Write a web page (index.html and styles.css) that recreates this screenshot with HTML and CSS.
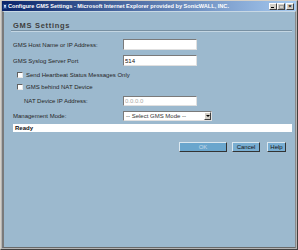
FILE: index.html
```html
<html>
<head>
<meta name="viewport" content="width=device-width, initial-scale=1" />
<title>Configure GMS Settings</title>
<link rel="stylesheet" href="styles.css">
</head>
<body>
<div class="window">
    <div class="titlebar">
        <span class="appicon"></span>
        <span class="title">Configure GMS Settings - Microsoft Internet Explorer provided by SonicWALL, INC.</span>
        <span class="winbtns">
            <span class="wbtn min"></span><span class="wbtn max"></span><span class="wbtn close">&#215;</span>
        </span>
    </div>
    <div class="client">
        <h2 class="section">GMS Settings</h2>
        <div class="row r1">
            <label class="lbl">GMS Host Name or IP Address:</label>
            <input class="field" type="text" value="">
        </div>
        <div class="row r2">
            <label class="lbl">GMS Syslog Server Port</label>
            <input class="field" type="text" value="514">
        </div>
        <div class="row cb r3">
            <input class="check" type="checkbox"><span>Send Heartbeat Status Messages Only</span>
        </div>
        <div class="row cb r4">
            <input class="check" type="checkbox"><span>GMS behind NAT Device</span>
        </div>
        <div class="row r5">
            <label class="lbl indent">NAT Device IP Address:</label>
            <input class="field" type="text" value="0.0.0.0" disabled>
        </div>
        <div class="row r6">
            <label class="lbl">Management Mode:</label>
            <div class="select"><span class="opt">-- Select GMS Mode --</span><span class="arrow"></span></div>
        </div>
        <div class="status">Ready</div>
        <div class="buttons">
            <button class="btn ok" disabled>OK</button>
            <button class="btn cancel">Cancel</button>
            <button class="btn help">Help</button>
        </div>
    </div>
</div>
</body>
</html>
```
FILE: styles.css
```css
html, body { margin: 0; padding: 0; }
body { width: 298px; height: 250px; overflow: hidden; font-family: "Liberation Sans", Arial, sans-serif; font-size: 6px; color: #262626; }

.window { box-sizing: border-box; width: 298px; height: 250px; display: flex; flex-direction: column; background: #b4b4b4; border: 1px solid #d4d0c8; border-right-color: #404040; border-bottom-color: #404040; padding: 0 1px 1px 1px; }
.titlebar { height: 10px; display: flex; align-items: center; background: linear-gradient(to right, #0a246a, #a6caf0); color: #fff; padding: 0 2px 0 0; }
.appicon { width: 4px; height: 5px; margin: 0 1px 0 1px; background: linear-gradient(#e8f0ff, #6a8ec8); border: 1px solid #23478a; box-sizing: border-box; }
.title { font-weight: bold; font-size: 5.6px; white-space: nowrap; flex: 1; }
.winbtns { display: flex; margin-top: 1px; }
.wbtn { width: 8px; height: 7px; box-sizing: border-box; background: #d4d0c8; border: 1px solid; border-color: #fff #404040 #404040 #fff; font-size: 6px; line-height: 5px; text-align: center; color: #000; position: relative; }
.wbtn.min:after { content: ""; position: absolute; left: 1px; bottom: 1px; width: 3px; height: 1px; background: #000; }
.wbtn.max:after { content: ""; position: absolute; left: 1px; top: 1px; width: 3px; height: 2px; border: 1px solid #a0a0a0; }
.wbtn.close { margin-left: 1px; font-weight: bold; }

.client { flex: 1; display: flex; flex-direction: column; background: #9cb9ce; border-top: 1px solid #c8d8e4; border-left: 2px solid #7a7a7a; border-right: 1px solid #8a8a8a; border-bottom: 1px solid #6a6a6a; }

.section { margin: 10px 3px 0 7px; padding: 0 0 1px 2px; font-size: 7.5px; font-weight: bold; color: #404040; letter-spacing: 0.7px; border-bottom: 1px solid #7890a2; box-shadow: 0 1px 0 #c4d6e2; height: 7px; line-height: 7px; }

.row { display: flex; align-items: center; padding-left: 9px; height: 11px; }
.lbl { width: 110px; }
.lbl.indent { padding-left: 11px; width: 99px; }
.r1 { margin-top: 8px; }
.r2 { margin-top: 5px; }
.r3 { margin-top: 4px; height: 10px; }
.r4 { margin-top: 2px; height: 10px; }
.r5 { margin-top: 4px; height: 10px; }
.r6 { margin-top: 5px; height: 10px; }

.field { box-sizing: border-box; width: 74px; height: 100%; margin: 0; padding: 0 1px; font: inherit; background: #fff; border: 1px solid; border-color: #7a7a7a #e0e0e0 #e0e0e0 #7a7a7a; outline: none; color: #111; }
.field:disabled { color: #a8a8a8; background: #fff; }

.cb { padding-left: 13px; }
.check { appearance: none; -webkit-appearance: none; box-sizing: border-box; width: 6px; height: 6px; margin: 0 3px 0 0; background: #fff; border: 1px solid; border-color: #606060 #e8e8e8 #e8e8e8 #606060; }

.select { box-sizing: border-box; width: 89px; height: 100%; display: flex; align-items: center; background: #fff; border: 1px solid; border-color: #7a7a7a #e0e0e0 #e0e0e0 #7a7a7a; }
.opt { flex: 1; padding-left: 2px; color: #333; }
.arrow { width: 7px; height: 8px; box-sizing: border-box; background: #d4d0c8; border: 1px solid; border-color: #fff #404040 #404040 #fff; display: flex; align-items: center; justify-content: center; }
.arrow:after { content: ""; border-left: 2px solid transparent; border-right: 2px solid transparent; border-top: 2px solid #000; }

.status { margin: 3px 3px 0 9px; height: 8px; line-height: 8px; background: #fff; font-weight: bold; padding-left: 2px; color: #111; }

.buttons { display: flex; justify-content: flex-end; margin: 10px 9px 0 0; height: 10px; }
.btn { box-sizing: border-box; height: 10px; margin: 0 0 0 5px; padding: 0; font: inherit; color: #111; background: #79aed2; border: 1px solid; border-color: #dbe8f0 #333 #333 #dbe8f0; line-height: 7px; }
.btn.ok { width: 48px; color: #c4dbe9; background: #6aa6cd; }
.btn.cancel { width: 28px; }
.btn.help { width: 19px; margin-left: 7px; }
```
